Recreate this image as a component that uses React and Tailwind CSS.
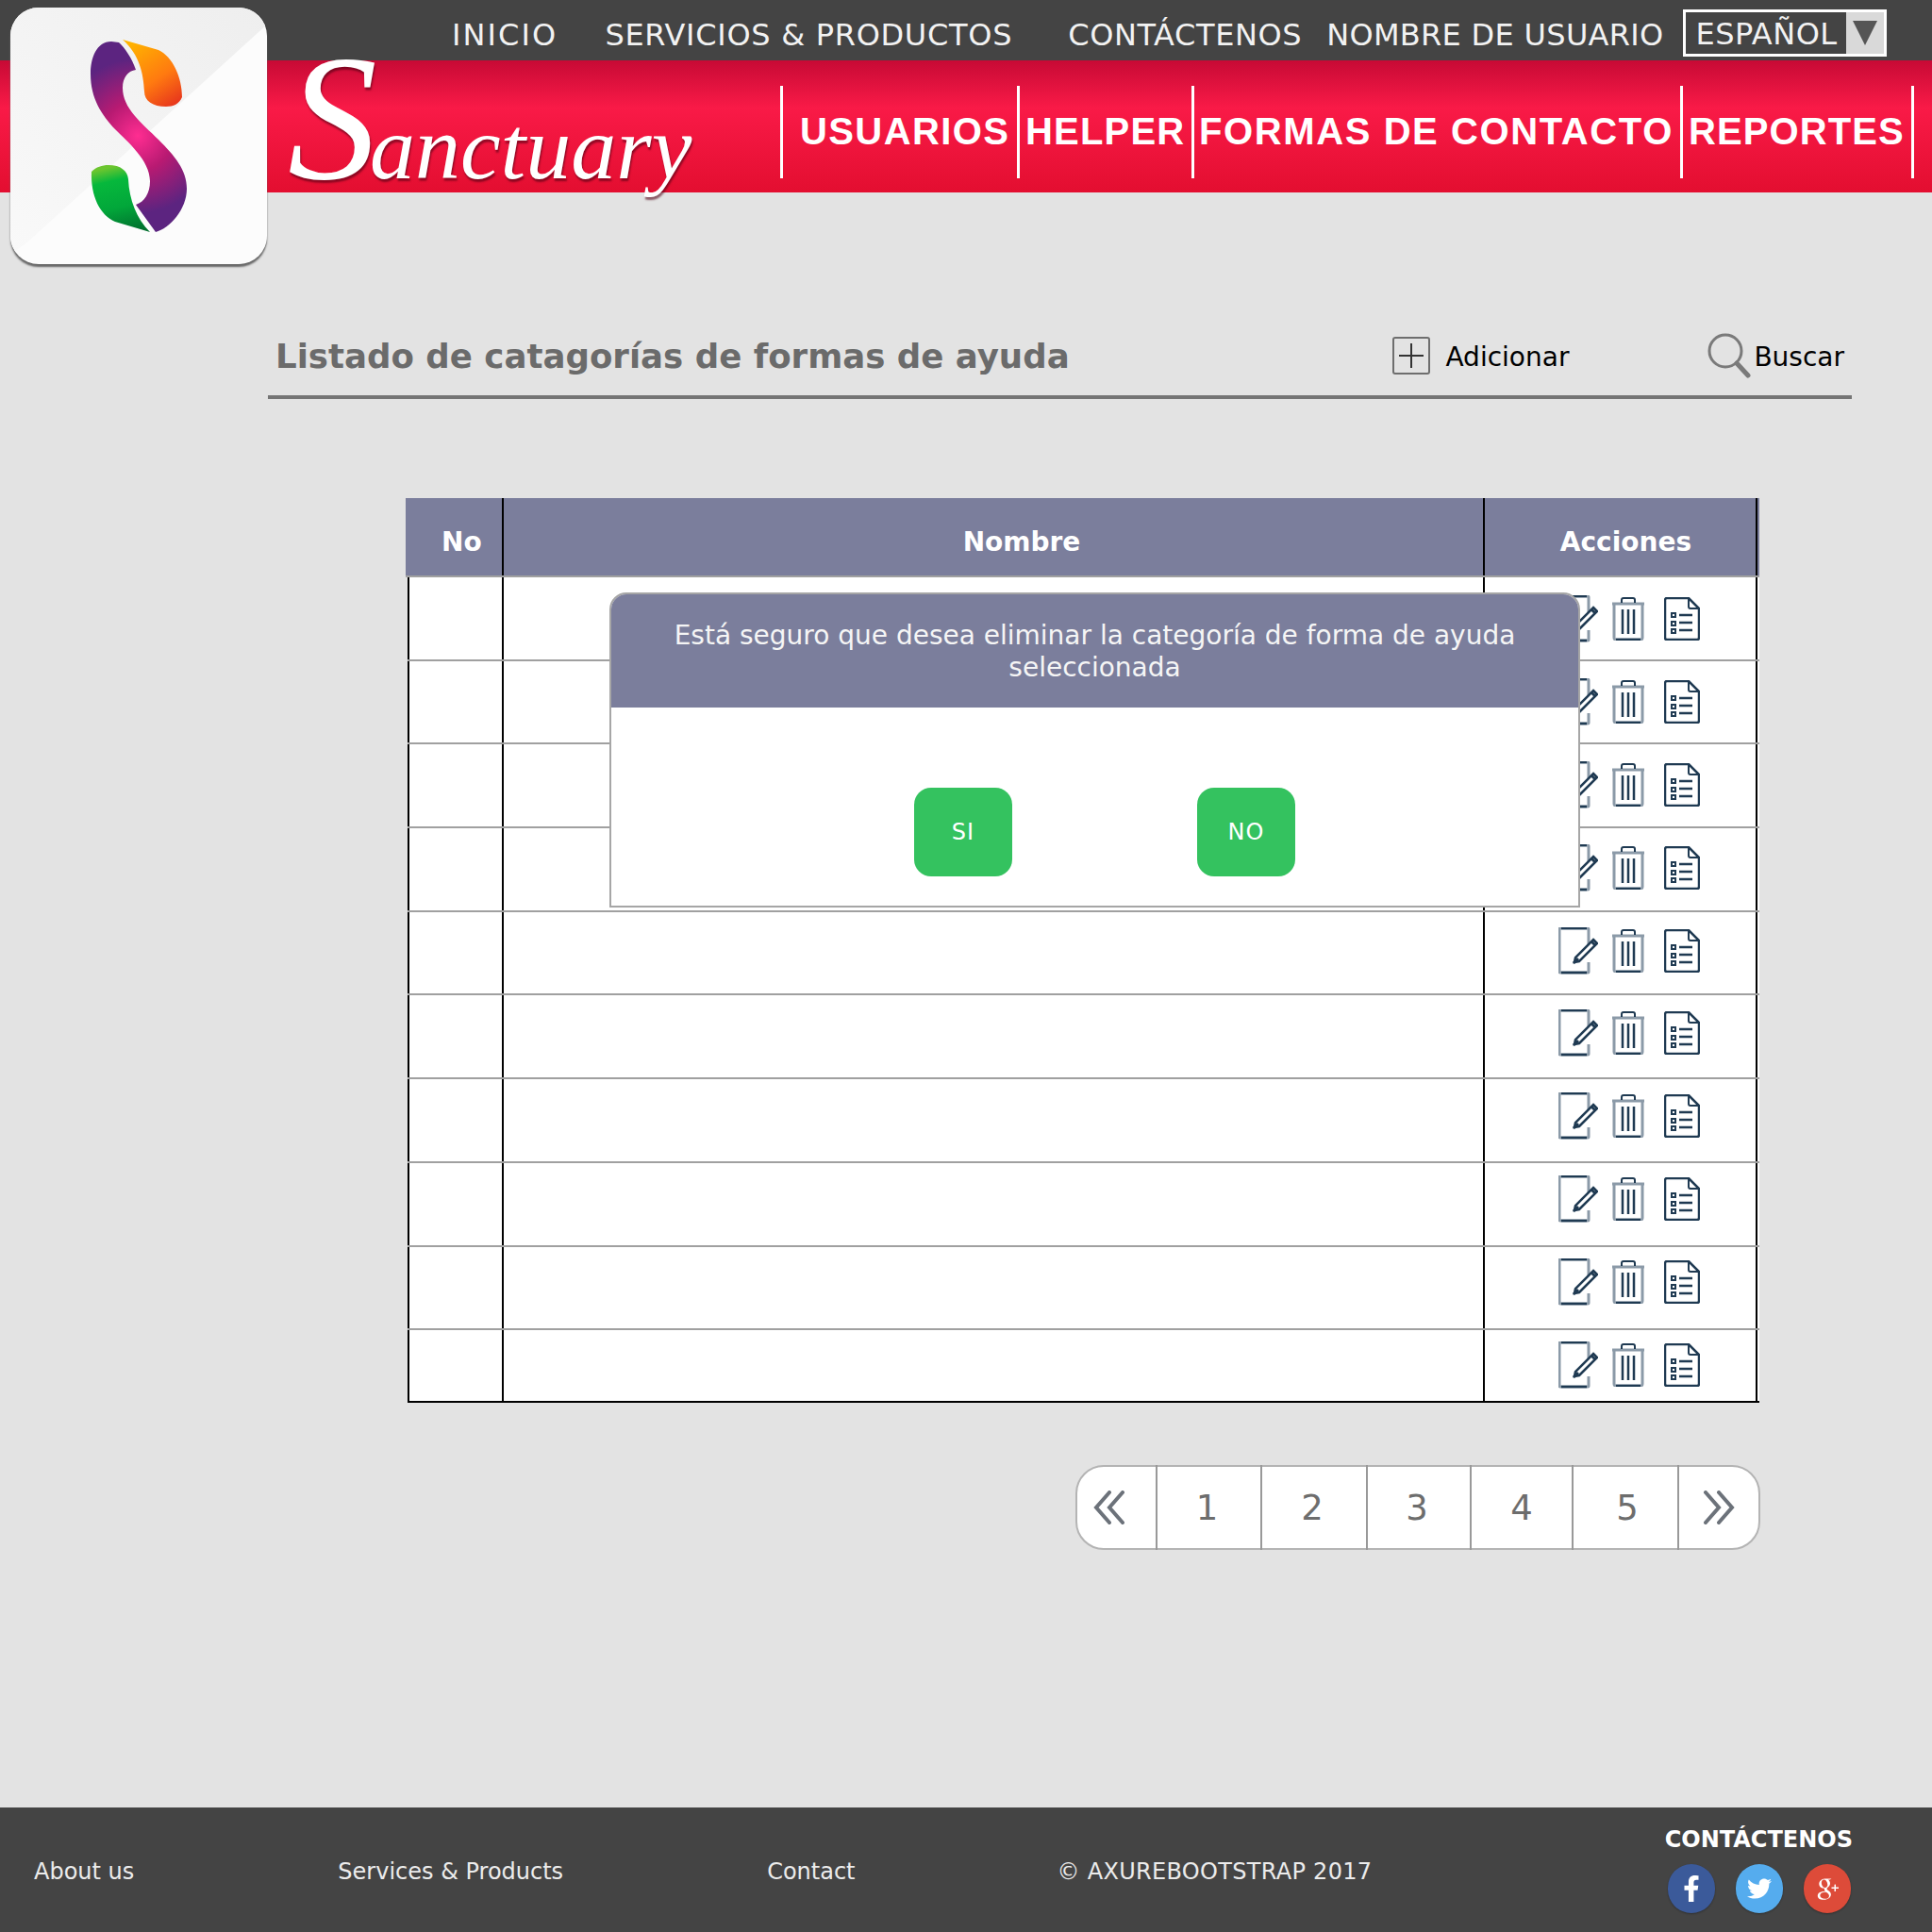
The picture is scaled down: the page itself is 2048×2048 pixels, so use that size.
import React from 'react';
import { FaFacebookF, FaTwitter } from 'react-icons/fa';
import { TiSocialGooglePlus } from 'react-icons/ti';

const rows = [0, 1, 2, 3, 4, 5, 6, 7, 8, 9];
const pages = [
  { label: '1', w: 'w-[111px]', pad: 'pr-1' },
  { label: '2', w: 'w-[112px]', pad: 'pr-1' },
  { label: '3', w: 'w-[110px]', pad: 'pr-1' },
  { label: '4', w: 'w-[108px]', pad: 'pr-0' },
  { label: '5', w: 'w-[112px]', pad: 'pl-1' },
];

const Logo = () => (
  <div className="absolute left-[11px] top-[8px] w-[272px] h-[272px] rounded-[30px] overflow-hidden bg-[#fcfcfc] shadow-[0_3px_2px_#666]">
    <svg viewBox="11 8 272 272" className="w-full h-full">
      <defs>
        <radialGradient id="body" gradientUnits="userSpaceOnUse" cx="146" cy="144" r="82">
          <stop offset="0" stopColor="#ff2d91" />
          <stop offset="0.45" stopColor="#b81a72" />
          <stop offset="1" stopColor="#5c2480" />
        </radialGradient>
        <linearGradient id="orange" x1="0.2" y1="0" x2="0.8" y2="1">
          <stop offset="0" stopColor="#ffb400" />
          <stop offset="0.6" stopColor="#ff7a10" />
          <stop offset="1" stopColor="#e8391c" />
        </linearGradient>
        <linearGradient id="green" x1="0.5" y1="0" x2="0.7" y2="1">
          <stop offset="0" stopColor="#6cc52f" />
          <stop offset="0.2" stopColor="#06b83c" />
          <stop offset="0.6" stopColor="#02a73a" />
          <stop offset="1" stopColor="#016f2e" />
        </linearGradient>
        <linearGradient id="sheen" x1="1" y1="0" x2="0" y2="1">
          <stop offset="0" stopColor="#eeeeee" />
          <stop offset="1" stopColor="#f9f9f9" />
        </linearGradient>
      </defs>
      <polygon points="11,8 283,8 283,26 30,256 11,270" fill="url(#sheen)" />
      <path
        d="M118 44 C102 44 96 62 96 78 C96 105 108 122 122 137 C135 150 159 170 159 192 C159 205 153 214 144 217 L165 246 C180 242 198 222 198 200 C198 180 185 165 168 148 C150 130 130 115 130 93 C130 82 136 75 144 74 C140 62 132 50 126 45 Z"
        fill="url(#body)"
      />
      <path
        d="M130 42 L168 53 C183 60 193 82 193 103 C190 110 184 113 176 113 C162 113 153 107 153 97 C152 78 148 58 130 42 Z"
        fill="url(#orange)"
      />
      <path
        d="M97 182 C102 177 108 175 115 175 C128 175 135 181 136 190 C137 212 145 232 159 246 L122 235 C106 228 96 208 97 182 Z"
        fill="url(#green)"
      />
    </svg>
  </div>
);

const EditIcon = () => (
  <svg viewBox="0 0 42 50" className="w-[42px] h-[50px]" fill="none">
    <path d="M32 18 V2 a1 1 0 0 0 -1 -1 H2 a1 1 0 0 0 -1 1 V47 a1 1 0 0 0 1 1 H31 a1 1 0 0 0 1 -1 V37" stroke="#8b9aa8" strokeWidth="3" />
    <path d="M3 1 H30 M3 48 H30" stroke="#1f3a52" strokeWidth="2.5" />
    <path d="M37 13 L41 17 L22 36 L17 37 L18 32 Z" stroke="#1f3a52" strokeWidth="2.5" fill="#fff" />
    <path d="M35 15 L39 19 M16 38 L21 33" stroke="#1f3a52" strokeWidth="3" />
  </svg>
);

const TrashIcon = () => (
  <svg viewBox="0 0 36 46" className="w-[36px] h-[46px]" fill="none">
    <path d="M1 7 H35" stroke="#8b9aa8" strokeWidth="3" />
    <path d="M11 6 V3 a2 2 0 0 1 2 -2 H23 a2 2 0 0 1 2 2 V6" stroke="#1f3a52" strokeWidth="2" />
    <path d="M3 8 V43 a2 2 0 0 0 2 2 H31 a2 2 0 0 0 2 -2 V8" stroke="#8b9aa8" strokeWidth="3" />
    <path d="M5 45 H31" stroke="#1f3a52" strokeWidth="2.5" />
    <path d="M12 13 V39 M18 13 V39 M24 13 V39" stroke="#1f3a52" strokeWidth="2.5" />
  </svg>
);

const ListIcon = () => (
  <svg viewBox="0 0 38 46" className="w-[38px] h-[46px]" fill="none">
    <path d="M26 1 H3 a2 2 0 0 0 -2 2 V43 a2 2 0 0 0 2 2 H35 a2 2 0 0 0 2 -2 V12 Z" stroke="#1f3a52" strokeWidth="2.5" />
    <path d="M26 1 V10 a2 2 0 0 0 2 2 H37" stroke="#1f3a52" strokeWidth="2" />
    <rect x="8" y="17" width="4" height="4" stroke="#1f3a52" strokeWidth="2" />
    <rect x="8" y="26" width="4" height="4" stroke="#1f3a52" strokeWidth="2" />
    <rect x="8" y="34" width="4" height="4" stroke="#1f3a52" strokeWidth="2" />
    <path d="M16 19 H30 M16 27 H30 M16 35 H30" stroke="#1f3a52" strokeWidth="2.5" />
  </svg>
);

const App = () => {
  return (
    <div className="relative h-[2048px] flex flex-col bg-[#e3e3e3] font-['DejaVu_Sans',sans-serif] overflow-hidden">
      {/* Header */}
      <div className="h-16 bg-[#444444] flex items-center pl-[479px] text-[32px] text-[#f2f2f2] leading-none">
        <span className="mt-[9px] tracking-[2.1px]">INICIO</span>
        <span className="mt-[9px] ml-[50px] tracking-[0.7px]">SERVICIOS &amp; PRODUCTOS</span>
        <span className="mt-[9px] ml-[59px] tracking-[0.6px]">CONTÁCTENOS</span>
        <span className="mt-[9px] ml-[26px] tracking-[0.3px]">NOMBRE DE USUARIO</span>
        <div className="mt-[6px] ml-[20px] w-[216px] h-[50px] border-[3px] border-white flex items-center justify-between pl-[11px]">
          <span className="mt-[2px] tracking-[0.5px]">ESPAÑOL</span>
          <div className="w-[40px] h-full bg-[#d9d9d9] flex items-center justify-center">
            <svg viewBox="0 0 26 26" className="w-[26px] h-[26px]">
              <polygon points="0,0 26,0 13,26" fill="#555" />
            </svg>
          </div>
        </div>
      </div>
      <div className="h-[140px] bg-[linear-gradient(180deg,#c70a35_0%,#f91a47_36%,#e30e30_100%)] pl-[827px] pt-[27px]">
        <div className="flex h-[98px] text-[40px] font-bold text-white tracking-[1.4px] font-['Liberation_Sans',sans-serif]">
          <div className="w-[251px] border-l-[3px] border-white flex items-center pl-[18px] pb-[2px]">USUARIOS</div>
          <div className="w-[185px] border-l-[3px] border-white flex items-center pl-[6px] pb-[2px] tracking-[1.2px]">HELPER</div>
          <div className="w-[518px] border-l-[3px] border-white flex items-center pl-[5px] pb-[2px] tracking-[1.6px]">FORMAS DE CONTACTO</div>
          <div className="w-[248px] border-x-[3px] border-white flex items-center pl-[6px] pb-[2px] tracking-[1.1px]">REPORTES</div>
        </div>
      </div>
      <Logo />
      <div className="absolute left-[305px] top-[30px] text-white italic leading-none whitespace-nowrap font-['Liberation_Serif',serif] [text-shadow:1px_3px_2px_rgba(80,0,20,0.6)]">
        <span className="text-[190px]">S</span>
        <span className="text-[96px] -ml-2">anctuary</span>
      </div>

      {/* Title row */}
      <div className="mt-[140px] ml-[284px] w-[1679px] h-[79px] border-b-4 border-[#757575] flex items-center">
        <h1 className="ml-2 -mt-2 text-[35.6px] font-bold text-[#6b6b6b]">Listado de catagorías de formas de ayuda</h1>
        <div className="ml-auto -mt-[6px] flex items-center text-[28px] text-black">
          <div className="-mt-[3px] w-10 h-10 rounded-[3px] border-2 border-[#6e6e6e] flex items-center justify-center">
            <svg viewBox="0 0 26 26" className="w-[26px] h-[26px]">
              <path d="M13 0 V26 M0 13 H26" stroke="#333" strokeWidth="2" />
            </svg>
          </div>
          <span className="ml-4">Adicionar</span>
          <svg viewBox="0 0 46 48" className="-mt-1 ml-[147px] w-[46px] h-[48px]" fill="none">
            <circle cx="19" cy="19" r="17" stroke="#7a7a7a" strokeWidth="3" />
            <path d="M31 32 L43 45" stroke="#7a7a7a" strokeWidth="5" strokeLinecap="round" />
          </svg>
          <span className="ml-[3px] mr-2">Buscar</span>
        </div>
      </div>

      {/* Table */}
      <div className="relative mt-[105px] ml-[430px] w-[1435px]">
        <div className="flex h-[84px] bg-[#7b7e9c] text-[28px] font-bold text-white border-b-2 border-[#a0a0a0]">
          <div className="w-[104px] border-r-2 border-black flex items-center pl-[38px] pt-[11px]">No</div>
          <div className="w-[1040px] border-r-2 border-black flex items-center justify-center pl-[60px] pt-[11px]">Nombre</div>
          <div className="w-[289px] border-r-2 border-black flex items-center justify-center pl-3 pt-[11px]">Acciones</div>
        </div>
        {rows.map((row) => (
          <div
            key={row}
            className={`flex bg-white ${row === 9 ? 'h-[77px] border-b-2 border-b-black' : 'h-[88.7px] border-b-2 border-b-[#a0a0a0]'} ml-[2px]`}
          >
            <div className="w-[102px] border-l-2 border-r-2 border-black" />
            <div className="w-[1040px] border-r-2 border-black" />
            <div
              className="w-[289px] border-r-2 border-black flex items-start pl-[78px]"
              style={{ paddingTop: 19 - row * 0.8 }}
            >
              <EditIcon />
              <div className="ml-[14px] mt-[2px]"><TrashIcon /></div>
              <div className="ml-[20px] mt-[2px]"><ListIcon /></div>
            </div>
          </div>
        ))}

        {/* Delete dialog */}
        <div className="absolute left-[216px] top-[100px] w-[1029px] h-[334px] bg-white border-2 border-[#a6a6a6] rounded-t-[18px]">
          <div className="h-[120px] pt-[2px] bg-[#7b7e9c] rounded-t-[16px] flex items-center justify-center text-center text-[28px] leading-[34px] text-[#f5f5f5] px-10">
            Está seguro que desea eliminar la categoría de forma de ayuda seleccionada
          </div>
          <div className="flex pt-[85px] pl-[321px] gap-[196px]">
            <button className="w-[104px] h-[94px] rounded-[18px] bg-[#34c25f] text-white text-[24px] tracking-[1px]">SI</button>
            <button className="w-[104px] h-[94px] rounded-[18px] bg-[#34c25f] text-white text-[24px] tracking-[1px]">NO</button>
          </div>
        </div>
      </div>

      {/* Pagination */}
      <div className="mt-[66px] ml-[1140px] w-[726px] h-[90px] bg-white border-2 border-[#b4b4b4] rounded-[30px] flex text-[37px] text-[#6d6d6d]">
        <div className="w-[83px] flex items-center justify-center pr-4">
          <svg viewBox="0 0 34 36" className="w-[34px] h-[36px]" fill="none">
            <path d="M17 2 L3 18 L17 34 M31 2 L17 18 L31 34" stroke="#6c727a" strokeWidth="4" strokeLinecap="round" />
          </svg>
        </div>
        {pages.map((page) => (
          <div key={page.label} className={`${page.w} ${page.pad} -my-[2px] pt-[2px] border-l-2 border-[#999999] flex items-center justify-center`}>
            {page.label}
          </div>
        ))}
        <div className="flex-1 -my-[2px] border-l-2 border-[#999999] flex items-center justify-center">
          <svg viewBox="0 0 34 36" className="w-[34px] h-[36px]" fill="none">
            <path d="M3 2 L17 18 L3 34 M17 2 L31 18 L17 34" stroke="#6c727a" strokeWidth="4" strokeLinecap="round" />
          </svg>
        </div>
      </div>

      {/* Footer */}
      <div className="mt-auto h-[132px] bg-[#444444] flex text-[24px] text-[#ececec] pl-9">
        <div className="flex items-center pt-[3px]">
          <span>About us</span>
          <span className="ml-[216px]">Services &amp; Products</span>
          <span className="ml-[216px]">Contact</span>
          <span className="ml-[214px] tracking-[0.3px]">© AXUREBOOTSTRAP 2017</span>
        </div>
        <div className="ml-auto mr-[84px] pt-[20px] flex flex-col items-center">
          <span className="text-[24px] font-bold text-white leading-[28px]">CONTÁCTENOS</span>
          <div className="mt-[12px] ml-[2px] flex gap-[22px]">
            <div className="w-[50px] h-[52px] rounded-full bg-[#3b5a9a] flex items-center justify-center shadow-[0_1px_2px_rgba(0,0,0,0.3)]">
              <FaFacebookF className="text-white w-[26px] h-[28px]" />
            </div>
            <div className="w-[50px] h-[52px] rounded-full bg-[#55acee] flex items-center justify-center shadow-[0_1px_2px_rgba(0,0,0,0.3)]">
              <FaTwitter className="text-white w-[26px] h-[26px]" />
            </div>
            <div className="w-[50px] h-[52px] rounded-full bg-[#dd4b39] flex items-center justify-center shadow-[0_1px_2px_rgba(0,0,0,0.3)]">
              <TiSocialGooglePlus className="text-white w-[36px] h-[36px]" />
            </div>
          </div>
        </div>
      </div>
    </div>
  );
};

export default App;
